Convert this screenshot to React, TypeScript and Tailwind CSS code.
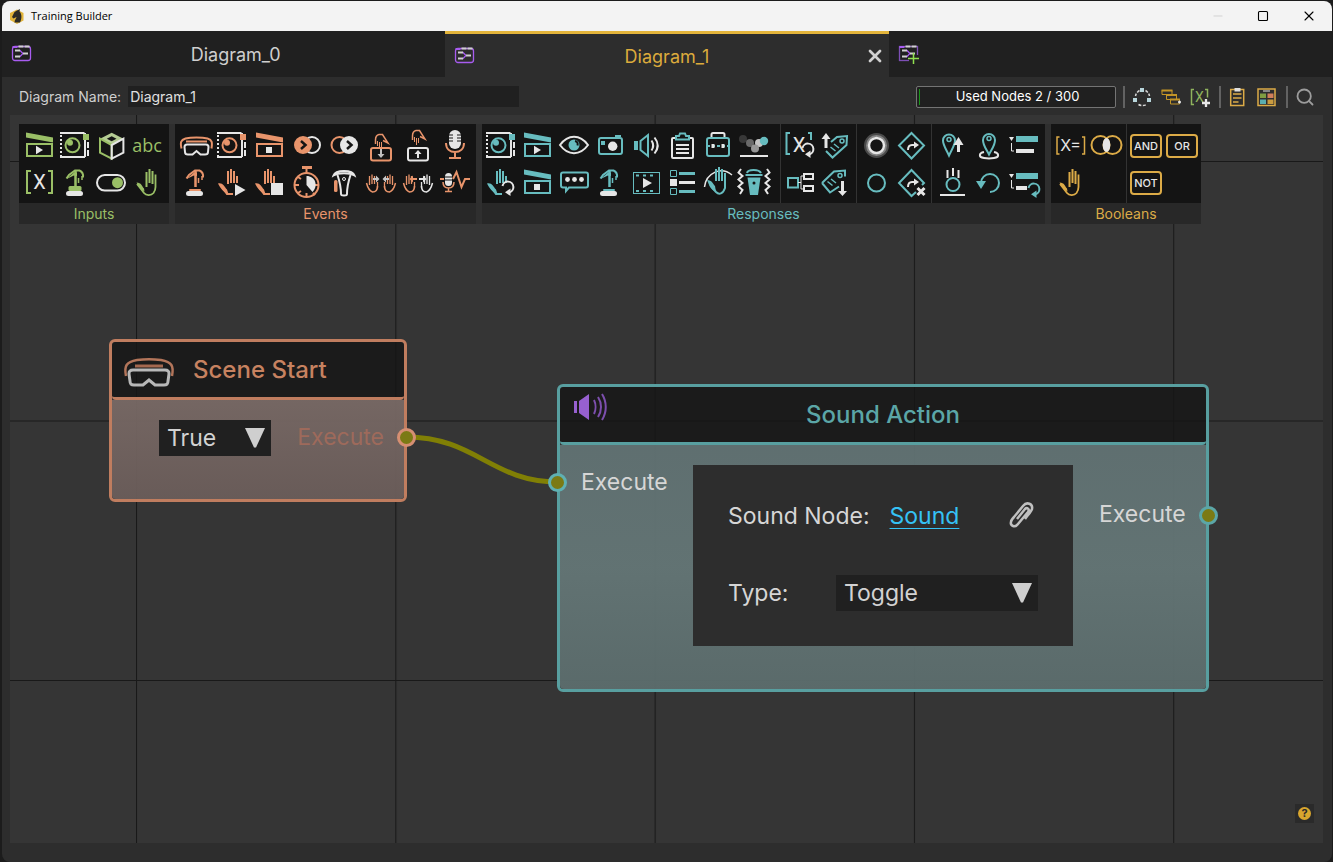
import React from 'react';
import { X, Square, Minus, Search } from 'lucide-react';

const GREEN = '#9abf66';
const ORANGE = '#e8946b';
const TEAL = '#67bcbf';
const YELLOW = '#dcab47';
const WHITE = '#e6e6e6';
const DARK = '#141414';

type Tint = { c: string };

const Icon = ({ children }: { children: React.ReactNode }) => (
  <svg width="36" height="36" viewBox="0 0 36 36" fill="none" strokeWidth="2" aria-hidden="true">
    {children}
  </svg>
);

const Clapper = ({ c, stop }: Tint & { stop?: boolean }) => (
  <Icon>
    <path d="M5 4.500 32 9.500v5L5 9.500z" fill={c} />
    <rect x="6" y="16" width="25" height="12" stroke={c} />
    {stop ? <rect x="15" y="19" width="6" height="6" fill={WHITE} /> : <path d="M15 17.800 22 22l-7 4.200z" fill={WHITE} />}
  </Icon>
);

const Spec = ({ c }: Tint) => (
  <Icon>
    <path d="M3 5h24.500M28 5v24M3 29h25" stroke={WHITE} />
    <path d="M4 7v22" stroke={WHITE} strokeDasharray="2 2" />
    <path d="M31 14v16" stroke={WHITE} strokeDasharray="6 2" />
    <rect x="26" y="6" width="6" height="6" fill={c} />
    <circle cx="15.500" cy="17.300" r="7" stroke={c} />
    <circle cx="13" cy="14.800" r="3" fill={c} />
  </Icon>
);

const Cube = ({ c }: Tint) => (
  <Icon>
    <path d="M18.700 4.800 30.500 10.700 18.700 17 7 10.700z" fill="#b5cc94" />
    <path d="M18.700 8.200 23.500 10.700l-4.800 2.500-4.900-2.500z" fill={DARK} />
    <path d="M18.700 17 7 10.700v14l11.700 6z" stroke={c} />
    <path d="M18.700 17v13.700l11.700-6v-14z" stroke={WHITE} />
  </Icon>
);

const Abc = ({ c }: Tint) => (
  <Icon>
    <text x="18" y="24" textAnchor="middle" fill={c} fontSize="18" fontFamily="'Open Sans',sans-serif">abc</text>
  </Icon>
);

const VarX = ({ c }: Tint) => (
  <Icon>
    <path d="M10 6H6v22h4M27 6h4v22h-4" stroke={c} />
    <text x="18.500" y="24" textAnchor="middle" fill={WHITE} fontSize="20" fontFamily="Roboto,sans-serif">X</text>
  </Icon>
);

const Press = ({ c, raised }: Tint & { raised?: boolean }) => (
  <Icon>
    <path d="M9.500 13.500 12 10l6-4.500h4.500c2.500 1 4 3 3.500 7" stroke={c} />
    <path d="M9.500 14 17 7.500h3V11l-3-.5z" fill={c} />
    <path d="M18.500 6v16" stroke={c} strokeWidth="2.500" />
    <path d="M21.500 13v5M25 11v4" stroke={c} strokeWidth="1.500" />
    {raised ? <rect x="11.500" y="21" width="13" height="5" rx="1.500" fill={c} /> : <rect x="12" y="24" width="12" height="2" rx="1" fill={c} />}
    <rect x="9" y="26" width="17" height="5" rx="2.500" fill={WHITE} />
  </Icon>
);

const Toggle = ({ c }: Tint) => (
  <Icon>
    <rect x="4" y="10" width="28" height="15.500" rx="7.700" stroke={WHITE} />
    <circle cx="24.500" cy="17.700" r="5.500" fill={c} />
  </Icon>
);

const Hand = ({ c }: Tint) => (
  <Icon>
    <path d="M8 19l7 9c2 2.500 7 3 9.500 0 1.500-2 2-4 2-6V9.500" stroke={c} strokeWidth="1.800" />
    <path d="M7.500 17.500c5 0 5.500 4 7.500 6l.5 3c-4-2-6-5-8-9z" fill={c} />
    <path d="M17.500 7v15M20.500 4v14M23.500 6v13" stroke={c} />
  </Icon>
);

// open hand shared by the grab icons, with room for a badge at the lower right
const PalmShape = ({ c }: Tint) => (
  <>
    <path d="M14 6v13M17 4v14M20 6v12M23 11v7" stroke={c} />
    <path d="M8 22l5 7h6" stroke={c} />
    <path d="M4 18.500c5-1 6 3 9 6l1.500 4.500c-5-1.500-8-5.500-10.500-10.500z" fill={c} />
  </>
);

const HandPlay = ({ c }: Tint) => (
  <Icon>
    <PalmShape c={c} />
    <path d="M21 19l10.500 6L21 31z" fill={WHITE} />
  </Icon>
);

const HandStop = ({ c }: Tint) => (
  <Icon>
    <PalmShape c={c} />
    <rect x="20" y="18" width="12" height="12" fill={WHITE} />
  </Icon>
);

const Turn = ({ x, y, c = WHITE }: { x: number; y: number; c?: string }) => (
  <g transform={`translate(${x} ${y})`}>
    <path d="M-5.500-1A5.500 5.500 0 1 1 1 5.500" stroke={c} />
    <path d="M2.500 1.500v7.500L-3 5.300z" fill={c} />
  </g>
);

const HandTurn = ({ c }: Tint) => (
  <Icon>
    <PalmShape c={c} />
    <Turn x={25} y={22} />
  </Icon>
);

const Goggles = ({ c }: Tint) => (
  <Icon>
    <path d="M4.500 20.500C3 14 4 12 8.500 10.500 14 9 25 9 30.500 10.500 35 12 35.500 14 34.500 20.500" stroke={c} />
    <path d="M9 13.500h21" stroke={c} />
    <path d="M10 16.500h19c2 0 2.500 1 2.500 2.500l-.5 5c0 2-1 2.500-3 2.500h-4.500L19.500 23l-4 3.500H11c-2 0-3-.5-3-2.500l-.5-5c0-1.500.5-2.500 2.500-2.500z" stroke={WHITE} />
  </Icon>
);

const Enter = ({ c, leave }: Tint & { leave?: boolean }) => (
  <Icon>
    {leave ? (
      <>
        <circle cx="14.500" cy="17" r="8" stroke={c} />
        <circle cx="24" cy="17" r="9" fill={WHITE} />
        <path d="m22 13 4.500 4-4.500 4" stroke={DARK} strokeWidth="2.500" />
      </>
    ) : (
      <>
        <circle cx="24" cy="17" r="8" stroke={WHITE} />
        <circle cx="15" cy="17" r="9" fill={c} />
        <path d="m13 13 4.500 4-4.500 4" stroke={DARK} strokeWidth="2.500" />
      </>
    )}
  </Icon>
);

const Grab = ({ c, up }: Tint & { up?: boolean }) => (
  <Icon>
    <g transform={up ? 'translate(0 -4)' : undefined}>
      <path d="M13.500 16v-4c0-3 1-5 3.500-5.500h3.500l5.500 8.500-5-2.500" stroke={c} strokeWidth="1.500" />
      <path d="M15.500 13v5M17.500 14v7M19.500 14v5" stroke={c} strokeWidth="1" />
    </g>
    <rect x="9" y="20" width="20" height="12.500" rx="2" stroke={up ? WHITE : c} />
    {up ? <path d="M18 30v-4h-2.500l3.500-4 3.500 4H20v4z" fill={WHITE} /> : <path d="M18 21v5h-2.500l3.500 4 3.500-4H20v-5z" fill="#c0c0c0" />}
  </Icon>
);

const Mic = ({ c }: Tint) => (
  <Icon>
    <rect x="13" y="2" width="12" height="19" rx="6" fill={WHITE} />
    <path d="M13 7h4M13 10h4M13 13h4M21 7h4M21 10h4M21 13h4" stroke={DARK} strokeWidth="1" />
    <path d="M10 15c0 6 4 9 9 9s9-3 9-9M19 24v5M13 30h12" stroke={c} />
  </Icon>
);

const MicWave = ({ c }: Tint) => (
  <Icon>
    <rect x="9" y="8" width="7" height="13" rx="3.500" fill={WHITE} />
    <path d="M9 12h7M9 15h7" stroke={DARK} strokeWidth="1" />
    <path d="M7 17c0 4 2 6 5.500 6s5.500-2 5.500-6M12.500 23v3M9 26.500h7" stroke={c} strokeWidth="1.500" />
    <path d="M4 14h4M17 14l3.500-7 5 15 3.500-8h5" stroke={c} />
  </Icon>
);

const Stopwatch = ({ c }: Tint) => (
  <Icon>
    <circle cx="18.500" cy="20" r="12" stroke={c} />
    <path d="M18.500 4v4M18.500 28v3M7 20h4M27 20h3M10 12l3 2M10 28l3-2M25 28l2 2" stroke={c} />
    <rect x="14" y="1" width="10" height="3" fill={c} />
    <path d="M18.500 11v9l6 7c6-6 3-16-6-16z" fill={WHITE} />
  </Icon>
);

const Torch = ({ c }: Tint) => (
  <Icon>
    <path d="M8.500 10.500c2-6 19-6 21 0-5-3-16-3-21 0z" stroke={WHITE} />
    <path d="M12.500 10c2 6 3.500 12 3.500 19 0 2 6 2 6 0 0-7 1.500-13 3.500-19" stroke={WHITE} />
    <circle cx="19" cy="14" r="1.500" stroke={WHITE} strokeWidth="1" />
    <rect x="9" y="15" width="3.500" height="12" rx="1.500" fill={c} />
  </Icon>
);

const MiniHand = ({ c }: Tint) => (
  <>
    <path d="M4.500 18c1 4 3 8 6 9 3 0 5-2 5-6" stroke={c} strokeWidth="1.500" />
    <path d="M7.500 11v9M10 9.500V19M12.500 11v8M15.500 17v6" stroke={c} strokeWidth="1.300" />
  </>
);

const TwoHands = ({ c, apart }: Tint & { apart?: boolean }) => (
  <Icon>
    <MiniHand c={c} />
    <g transform="translate(38 0) scale(-1 1)">
      <MiniHand c={apart ? WHITE : c} />
    </g>
    {apart ? (
      <path d="M18 13h-4v-2.500L10.500 14l3.500 3.500V15h4z" fill={c} />
    ) : (
      <path d="M11 13h3v-2.500l3.500 3.500-3.500 3.500V15h-3z" fill="#c8c8c8" />
    )}
    {apart ? (
      <path d="M20 13h4v-2.500l3.500 3.500-3.500 3.500V15h-4z" fill={WHITE} />
    ) : (
      <path d="M27 13h-3v-2.500L20.500 14l3.500 3.500V15h3z" fill="#c8c8c8" />
    )}
  </Icon>
);

const Eye = ({ c }: Tint) => (
  <Icon>
    <path d="M5 17c8-11 20-11 28 0-8 11-20 11-28 0z" stroke={WHITE} />
    <circle cx="19" cy="17" r="5.500" fill={c} />
    <path d="M20 13c2.500.5 3 2.500 2.500 4.500" stroke={DARK} />
  </Icon>
);

const Camera = ({ c }: Tint) => (
  <Icon>
    <rect x="8" y="10" width="23" height="16" rx="2" stroke={c} />
    <rect x="10" y="13" width="4" height="4" fill={c} />
    <rect x="24" y="7" width="6" height="2" fill={c} />
    <circle cx="21.700" cy="18.300" r="4.700" fill={WHITE} />
  </Icon>
);

const Speaker = ({ c }: Tint) => (
  <Icon>
    <rect x="7" y="13" width="4" height="9" fill={c} />
    <path d="M13.500 13 21 7v21l-7.500-6z" stroke={c} />
    <path d="M24.500 12.500c2 3 2 7 0 10M27.500 9.500c4 5 4 11 0 16" stroke={WHITE} />
  </Icon>
);

const Clipboard = ({ c }: Tint) => (
  <Icon>
    <rect x="9" y="10" width="21" height="20" rx="1" stroke={WHITE} />
    <path d="M13 11.500V8h3l1-2.500h5L23 8h3v3.500z" stroke={c} fill={DARK} />
    <path d="M13 17h13M13 21h13M13 25h13" stroke={WHITE} />
  </Icon>
);

const Toolbox = ({ c }: Tint) => (
  <Icon>
    <path d="M12.500 9V6.500c0-1 .5-1.500 1.500-1.500h10c1 0 1.500.5 1.500 1.500V9" stroke={WHITE} />
    <rect x="8" y="10" width="22" height="18" rx="2" stroke={c} />
    <path d="M8 18h22" stroke={c} strokeDasharray="3 2" />
    <path d="M12.500 16h3v4h-3zM22.500 16h3v4h-3z" fill={WHITE} />
  </Icon>
);

const Physics = ({ c }: Tint) => (
  <Icon>
    <circle cx="8" cy="11" r="4" fill="#383838" />
    <circle cx="15" cy="15" r="4" fill="#6a6a6a" />
    <circle cx="24" cy="15" r="4" fill="#c4c4c4" />
    <circle cx="20" cy="20.500" r="4" fill="#979797" />
    <circle cx="29" cy="13" r="4.200" fill={c} />
    <path d="M5 28h28" stroke={WHITE} />
  </Icon>
);

const Chat = ({ c }: Tint) => (
  <Icon>
    <path d="M8 7.500h23a2 2 0 0 1 2 2v11a2 2 0 0 1-2 2H14L11 26v-3.500H8a2 2 0 0 1-2-2v-11a2 2 0 0 1 2-2z" stroke={c} />
    <circle cx="12.500" cy="14.500" r="2.400" fill={WHITE} />
    <circle cx="19.500" cy="14.500" r="2.400" fill={WHITE} />
    <circle cx="26.500" cy="14.500" r="2.400" fill={WHITE} />
  </Icon>
);

const Film = ({ c }: Tint) => (
  <Icon>
    <rect x="6.500" y="7.500" width="26" height="21" stroke={c} strokeWidth="1" />
    <path d="M9 10.500h21M9 26h21" stroke={c} strokeDasharray="3 4" />
    <path d="M16 13 25 18l-9 5z" fill={WHITE} />
  </Icon>
);

const ListIcon = ({ c }: Tint) => (
  <Icon>
    <path d="M7.500 5.500h6v6h-6zM7.500 23.500h6v6h-6z" stroke={c} strokeWidth="1" />
    <path d="M7 14h7v7H7z" fill={WHITE} />
    <path d="M16 8.500h16M16 26.500h16" stroke={c} strokeWidth="3" />
    <path d="M16 17.500h16" stroke={WHITE} strokeWidth="3" />
  </Icon>
);

const HandWave = ({ c }: Tint) => (
  <Icon>
    <path d="M5.500 22C7 8 22 1 33 10" stroke={WHITE} strokeWidth="1.500" />
    <path d="M17 4v12M20 2v14M23 4v12M11 20l6 7c3 3 7 2 9-4V8" stroke={c} />
    <path d="M8 15c5 0 6 4 8 6l1 6c-5-2-7-7-9-12z" fill={c} />
  </Icon>
);

const Vibrate = ({ c }: Tint) => (
  <Icon>
    <path d="M6 4 3.500 7.500l4 3.500-4 3.500 4 3.500-4 3.500 4 3.500L5 29M32 4l2.500 3.500-4 3.500 4 3.500-4 3.500 4 3.500-4 3.500L33 29" stroke={WHITE} />
    <path d="M12 8c1-4 12-4 14 0M10.500 10h17" stroke={c} />
    <path d="M12.500 12.500h13L23 30h-8z" fill={c} />
    <circle cx="19" cy="18" r="1.500" fill={DARK} />
  </Icon>
);

const VarTurn = ({ c }: Tint) => (
  <Icon>
    <path d="M8 5H4.500v21H8M26 5h3v7" stroke={c} />
    <text x="17" y="24" textAnchor="middle" fill={WHITE} fontSize="20" fontFamily="Roboto,sans-serif">X</text>
    <Turn x={26} y={21} />
  </Icon>
);

const Tag = ({ c, down }: Tint & { down?: boolean }) => (
  <Icon>
    <path d={down ? 'M4 18 16 6.500l11-1v6M4 18l8 9.500 9-6' : 'M8 23l6.500 6.500L28.500 17l.5-9-10 1-6 5'} stroke={c} />
    <circle cx={down ? 22 : 24} cy={down ? 10.500 : 13} r="2" stroke={c} strokeWidth="1.500" />
    <path d={down ? 'm9.500 16.500 5 4M13 14l5 4' : 'm12.500 19 5 4M16 16l5 4'} stroke={c} strokeWidth="1.500" />
    {down ? <path d="M23 16h3v10h3l-4.500 5-4.500-5h3z" fill={WHITE} /> : <path d="M6.500 20V11H3.500L8 5l4.500 6h-3v9z" fill={WHITE} />}
  </Icon>
);

const Branch = ({ c }: Tint) => (
  <Icon>
    <rect x="6" y="13" width="10" height="9.500" stroke={c} />
    <path d="M16 17.500h3M21 11h-2v13h2" stroke={WHITE} strokeWidth="1" />
    <path d="M22 9h9v5h-9zM22 21h9v5h-9z" stroke={WHITE} />
  </Icon>
);

const Glow = () => (
  <Icon>
    <circle cx="18.500" cy="17.500" r="10.500" stroke="#4a4a4a" strokeWidth="4" />
    <circle cx="18.500" cy="17.500" r="9.500" stroke="#858585" />
    <circle cx="18.500" cy="17.500" r="7.500" stroke={WHITE} strokeWidth="2.500" />
  </Icon>
);

const Ring = ({ c }: Tint) => (
  <Icon>
    <circle cx="18.500" cy="18" r="8.500" stroke={c} />
  </Icon>
);

const Route = ({ c, cancel }: Tint & { cancel?: boolean }) => (
  <Icon>
    <path d={cancel ? 'M22 27l-4.500 4L5 18 17.500 5 30 18l-2 2' : 'M17.500 5 30 17.500 17.500 30.500 5 17.500z'} stroke={c} />
    <path d="M14 22c0-3 1-5 4-5h3" stroke={WHITE} />
    <path d="m20 13.500 5 3.500-5 3.500z" fill={WHITE} />
    {cancel && <path d="m23.500 23 7 7M30.500 23l-7 7" stroke={WHITE} strokeWidth="3" />}
  </Icon>
);

const PinUp = ({ c }: Tint) => (
  <Icon>
    <path d="M15 27.500C12 21 9 17 9 12.500a6 6 0 0 1 12 0c0 4.500-3 8.500-6 15z" stroke={c} />
    <circle cx="15" cy="11.500" r="2" stroke={c} strokeWidth="1.500" />
    <path d="M23 24v-7h-3.500l5-8 5 8H26v7z" fill={WHITE} />
  </Icon>
);

const Pin = ({ c }: Tint) => (
  <Icon>
    <path d="M14 24c-5 1-6 5 0 6 3 .5 7 .5 10 0 6-1 5-5 0-6" stroke={WHITE} />
    <path d="M19 26.500c-3-6-6-9-6-14.500a6 6 0 0 1 12 0c0 5.500-3 8.500-6 14.500z" stroke={c} />
    <circle cx="19" cy="10.500" r="2" stroke={c} strokeWidth="1.500" />
  </Icon>
);

const Tree = ({ c, turn }: Tint & { turn?: boolean }) => (
  <Icon>
    <path d="M3 9h5l-2.500 4z" fill={WHITE} />
    <path d="M5.500 15v8H8" stroke={WHITE} strokeWidth="1" />
    <rect x="10" y="8" width="22" height="6" fill={c} />
    <rect x="10" y="21" width={turn ? 11 : 18} height="4" fill={WHITE} />
    {turn && <Turn x={28} y={24} c={c} />}
  </Icon>
);

const Drop = ({ c }: Tint) => (
  <Icon>
    <path d="M13.500 5v8M19 3v8M24.500 5v8M6 30h25" stroke={WHITE} />
    <circle cx="19" cy="19.500" r="6.500" stroke={c} />
  </Icon>
);

const Undo = ({ c }: Tint) => (
  <Icon>
    <path d="M11 18a9 9 0 1 1 9 9" stroke={c} />
    <path d="M6 16h10l-5 8z" fill={c} />
  </Icon>
);

const VarEquals = ({ c }: Tint) => (
  <Icon>
    <path d="M7.500 9H5v17h2.500M30 9h2.500v17H30" stroke={c} strokeWidth="1.500" />
    <text x="18.500" y="23" textAnchor="middle" fill={WHITE} fontSize="16" fontFamily="Inter,sans-serif">X=</text>
  </Icon>
);

const Venn = ({ c }: Tint) => (
  <Icon>
    <circle cx="12.500" cy="17" r="9" stroke={c} />
    <circle cx="24.500" cy="17" r="9" stroke={c} />
    <ellipse cx="18.500" cy="17" rx="3.800" ry="7" fill={WHITE} />
  </Icon>
);

const Gate = ({ c, label }: Tint & { label: string }) => (
  <Icon>
    <rect x="3" y="7" width="30" height="22" rx="3" stroke={c} />
    <text x="18" y="22" textAnchor="middle" fill={WHITE} fontSize="11" fontWeight="500" fontFamily="Inter,sans-serif">{label}</text>
  </Icon>
);

type Tool = [string, React.ReactNode];

const groups: { title: string; color: string; sections: { grid: string; tools: Tool[] }[] }[] = [
  {
    title: 'Inputs',
    color: 'text-[#9abf66]',
    sections: [
      {
        grid: 'grid-cols-[repeat(4,36px)] pl-0.5 pr-1',
        tools: [
          ['Video', <Clapper c={GREEN} />], ['Object', <Spec c={GREEN} />], ['Model', <Cube c={GREEN} />], ['Text', <Abc c={GREEN} />],
          ['Variable', <VarX c={GREEN} />], ['Button', <Press c={GREEN} raised />], ['Switch', <Toggle c={GREEN} />], ['Hand', <Hand c={GREEN} />]
        ]
      }
    ]
  },
  {
    title: 'Events',
    color: 'text-[#e8946b]',
    sections: [
      {
        grid: 'grid-cols-[repeat(8,37px)] pl-px pr-1',
        tools: [
          ['Scene start', <Goggles c={ORANGE} />], ['Object event', <Spec c={ORANGE} />], ['Video stopped', <Clapper c={ORANGE} stop />], ['Enter', <Enter c={ORANGE} />],
          ['Leave', <Enter c={ORANGE} leave />], ['Put down', <Grab c={ORANGE} />], ['Pick up', <Grab c={ORANGE} up />], ['Voice', <Mic c={ORANGE} />],
          ['Pressed', <Press c={ORANGE} />], ['Hand start', <HandPlay c={ORANGE} />], ['Hand stop', <HandStop c={ORANGE} />], ['Timer', <Stopwatch c={ORANGE} />],
          ['Torch', <Torch c={ORANGE} />], ['Hands together', <TwoHands c={ORANGE} />], ['Hands apart', <TwoHands c={ORANGE} apart />], ['Voice level', <MicWave c={ORANGE} />]
        ]
      }
    ]
  },
  {
    title: 'Responses',
    color: 'text-[#67bcbf]',
    sections: [
      {
        grid: 'grid-cols-[repeat(8,36px)] pl-px pr-[9px]',
        tools: [
          ['Object action', <Spec c={TEAL} />], ['Play video', <Clapper c={TEAL} />], ['Visibility', <Eye c={TEAL} />], ['Camera', <Camera c={TEAL} />],
          ['Sound action', <Speaker c={TEAL} />], ['Checklist', <Clipboard c={TEAL} />], ['Toolbox', <Toolbox c={TEAL} />], ['Physics', <Physics c={TEAL} />],
          ['Hand reset', <HandTurn c={TEAL} />], ['Stop video', <Clapper c={TEAL} stop />], ['Message', <Chat c={TEAL} />], ['Press button', <Press c={TEAL} />],
          ['Animation', <Film c={TEAL} />], ['List', <ListIcon c={TEAL} />], ['Wave', <HandWave c={TEAL} />], ['Vibrate', <Vibrate c={TEAL} />]
        ]
      },
      {
        grid: 'grid-cols-[repeat(2,36px)] pl-px pr-0.5',
        tools: [['Set variable', <VarTurn c={TEAL} />], ['Add tag', <Tag c={TEAL} />], ['Branch', <Branch c={TEAL} />], ['Remove tag', <Tag c={TEAL} down />]]
      },
      {
        grid: 'grid-cols-[repeat(2,36px)] px-px',
        tools: [['Highlight', <Glow />], ['Route', <Route c={TEAL} />], ['Ring', <Ring c={TEAL} />], ['Cancel route', <Route c={TEAL} cancel />]]
      },
      {
        grid: 'grid-cols-[repeat(3,36px)] pl-0.5 pr-[3px]',
        tools: [
          ['Move pin', <PinUp c={TEAL} />], ['Pin', <Pin c={TEAL} />], ['Hierarchy', <Tree c={TEAL} />],
          ['Drop', <Drop c={TEAL} />], ['Undo', <Undo c={TEAL} />], ['Reset hierarchy', <Tree c={TEAL} turn />]
        ]
      }
    ]
  },
  {
    title: 'Booleans',
    color: 'text-[#dcab47]',
    sections: [
      {
        grid: 'grid-cols-[repeat(2,36px)] pl-px pr-0.5',
        tools: [['Compare', <VarEquals c={YELLOW} />], ['Overlap', <Venn c={YELLOW} />], ['Hand check', <Hand c={YELLOW} />]]
      },
      {
        grid: 'grid-cols-[repeat(2,36px)] px-px',
        tools: [['And', <Gate c={YELLOW} label="AND" />], ['Or', <Gate c={YELLOW} label="OR" />], ['Not', <Gate c={YELLOW} label="NOT" />]]
      }
    ]
  }
];

const DiagramIcon = ({ add }: { add?: boolean }) => (
  <svg width="22" height="20" viewBox="0 0 22 20" fill="none" aria-hidden="true">
    <rect x="1.500" y="2.500" width="18" height="14" rx={add ? 0 : 2.500} stroke={add ? '#7d4fb5' : '#a85cf0'} strokeWidth="1.300" />
    <path d="M1.500 3h5" stroke="#a85cf0" strokeWidth="2" />
    <path d="M7.500 2.500h11" stroke="#d0d0d0" strokeWidth="2" strokeDasharray="5 1" />
    <path d="M8.500 6 12 9.500 8.500 13" stroke="#a85cf0" strokeWidth="1.300" />
    <path d="M4 6.500h5M4 12.500h5M12 9.500h5" stroke="#d0d0d0" strokeWidth="2" />
    {add && (
      <>
        <path d="M11 11h11v9H11z" fill="#202020" />
        <path d="M15.500 9v11M10 14.500h11" stroke="#8fe04f" strokeWidth="1.500" />
      </>
    )}
  </svg>
);

const Logo = () => (
  <svg width="16" height="17" viewBox="0 0 16 17" aria-hidden="true">
    <path d="M8 1.500 14.500 5v7.500L8 16 1 12V5z" fill="#e2b43a" />
    <path d="M5.500 14.500c0-3 2-4 2-5.500L4.500 10.500 3 9l2.500-5L8 2.500 11 1l-.5 2.500c2.500 2.500 2.500 7 .5 11z" fill="#2c2b26" />
  </svg>
);

const TitleBar = () => (
  <header className="flex h-[30px] shrink-0 items-center rounded-t-lg bg-[#f3f3f3] pl-[7px] text-black">
    <Logo />
    <h1 className="ml-1.5 flex-1 font-['Open_Sans',sans-serif] text-[11px]">Training Builder</h1>
    <button aria-label="Minimize" className="flex h-full w-[45px] items-center justify-center text-[#c4c4c4]">
      <Minus size={14} strokeWidth={1.2} />
    </button>
    <button aria-label="Maximize" className="flex h-full w-[45px] items-center justify-center">
      <Square size={12} strokeWidth={2.2} />
    </button>
    <button aria-label="Close window" className="flex h-full w-[47px] items-center justify-center">
      <X size={16} strokeWidth={1.6} />
    </button>
  </header>
);

const Tabs = () => (
  <nav className="grid h-[46px] shrink-0 grid-cols-3 bg-[#202020] text-lg">
    <button className="relative flex items-center justify-center">
      <span className="absolute left-[9px]"><DiagramIcon /></span>
      <span className="pt-0.5 pl-6">Diagram_0</span>
    </button>
    <div className="relative flex items-center border-t-3 border-[#e3b43b] bg-[#2d2d2d] text-[#dcab3c]">
      <span className="absolute left-[9px]"><DiagramIcon /></span>
      <button className="flex-1 pt-0.5">Diagram_1</button>
      <button aria-label="Close Diagram_1" className="absolute right-1 text-[#d0d0d0]">
        <X size={20} strokeWidth={3.2} />
      </button>
    </div>
    <button aria-label="New diagram" className="flex items-center pl-[9px]">
      <DiagramIcon add />
    </button>
  </nav>
);

const Separator = () => <span className="h-[22px] w-0.5 bg-[#626262]" />;

const NameBar = () => (
  <div className="flex h-[38px] shrink-0 items-center px-[17px] pt-px text-[13px]">
    <label htmlFor="diagram-name" className="text-sm text-[#cfcfcf]">Diagram Name:</label>
    <input id="diagram-name" defaultValue="Diagram_1" className="ml-[7px] h-[21px] w-[391px] bg-[#202020] px-0.5 text-sm text-[#e0e0e0] outline-none" />
    <div className="ml-auto flex items-center gap-[7px]">
      <div className="flex h-[22px] w-[200px] items-center rounded-xs border border-[#747474] bg-[#202020] pl-0.5 text-white">
        <span className="h-4 w-px bg-[#199619]" />
        <span className="flex-1 text-center">Used Nodes 2 / 300</span>
      </div>
      <Separator />
      <button aria-label="Arrange nodes">
        <svg width="22" height="22" viewBox="0 0 22 22" fill="none">
          <path d="M7.500 4.500A8 8 0 0 0 3.500 10M13.500 4.500A8 8 0 0 1 17.500 10M6.500 18.500c2.500 1.500 5.500 1.500 8 0" stroke="#d8d8d8" strokeWidth="1.500" strokeDasharray="3 1.500" />
          <path d="M8 2h4v4H8zM1 12h4v4H1zM15 12h4v4h-4z" fill="#b9d6dc" />
        </svg>
      </button>
      <button aria-label="Node stack">
        <svg width="22" height="22" viewBox="0 0 22 22" fill="none">
          <path d="M1 4.500h10v4H1zM5.500 9h10v4.500h-10zM9.500 13.500h9V18h-9z" fill="#2d2d2d" stroke="#c29427" />
          <path d="M.5 4.500h11M5 9h11M9 13.500h10" stroke="#c29427" strokeWidth="2" />
          <circle cx="18.500" cy="16" r="1.500" fill="#e6e6e6" />
        </svg>
      </button>
      <button aria-label="Add variable">
        <svg width="22" height="22" viewBox="0 0 22 22" fill="none">
          <path d="M4 3.500H1.500v15H4M15 3.500h2.500v8" stroke="#8fb35d" strokeWidth="1.500" />
          <text x="9.500" y="16" textAnchor="middle" fontSize="14" fontFamily="Roboto,sans-serif" fill="#8fb35d">X</text>
          <path d="M16 13v8M12 17h8" stroke="#e8e8e8" strokeWidth="2.300" />
        </svg>
      </button>
      <Separator />
      <button aria-label="Notes">
        <svg width="22" height="22" viewBox="0 0 22 22" fill="none">
          <rect x="2.700" y="3.500" width="13" height="16" stroke="#dcab47" strokeWidth="1.500" />
          <path d="M5 8h8.500M5 12h8.500M5 16h5.500" stroke="#dcab47" strokeWidth="1.500" />
          <rect x="6.500" y="2" width="6" height="3.500" fill="#e0e0e0" />
        </svg>
      </button>
      <button aria-label="Palette">
        <svg width="22" height="22" viewBox="0 0 22 22" fill="none">
          <rect x="1" y="3" width="17" height="16.500" stroke="#dcab47" strokeWidth="1.500" />
          <path d="M6 5h7" stroke="#e0e0e0" />
          <path d="M3 7.500h6v4.500H3z" fill="#7f9c42" />
          <path d="M10.500 7.500h6v4.500h-6z" fill="#d07f5a" />
          <path d="M3 13.500h6V18H3z" fill="#5aaeb0" />
          <path d="M10.500 13.500h6V18h-6z" fill="#c99b40" />
        </svg>
      </button>
      <Separator />
      <button aria-label="Search" className="flex w-5 text-[#9c9c9c]">
        <Search size={20} strokeWidth={2.2} />
      </button>
    </div>
  </div>
);

const Palette = () => (
  <div className="flex w-fit gap-1.5 bg-[#2f2f2f]">
    {groups.map(group => (
      <section key={group.title} className="bg-[#282828]">
        <div className="flex divide-x divide-[#333] bg-[#141414]">
          {group.sections.map((section, i) => (
            <div key={i} className={`grid auto-rows-[36px] justify-items-center gap-y-px pt-1 pb-0.5 ${section.grid}`}>
              {section.tools.map(([name, icon]) => (
                <button key={name} aria-label={name} title={name}>{icon}</button>
              ))}
            </div>
          ))}
        </div>
        <h2 className={`text-center text-sm leading-[21px] ${group.color}`}>{group.title}</h2>
      </section>
    ))}
  </div>
);

const Dropdown = ({ id, options, className }: { id: string; options: string[]; className: string }) => (
  <div className={`relative h-9 ${className}`}>
    <select id={id} aria-label={id} className="h-full w-full appearance-none bg-[#202020] pl-2 text-[23px] text-[#d2d2d2] outline-none">
      {options.map(option => <option key={option}>{option}</option>)}
    </select>
    <svg width="20" height="20" viewBox="0 0 20 20" className="pointer-events-none absolute top-2 right-1.5" aria-hidden="true">
      <path d="M0 0h20l-9 19.500H9z" fill="#cfcfcf" />
    </svg>
  </div>
);

const Port = ({ className }: { className: string }) => (
  <span className={`absolute size-[19px] rounded-full border-3 bg-[#7b7a14] ${className}`} />
);

const SceneStartNode = () => (
  <article className="absolute top-[224px] left-[99px] h-[163px] w-[298px] rounded-md border-3 border-[#c07d5f]">
    <div className="flex h-[58px] items-center rounded-sm border-b-3 border-[#c07d5f] bg-[#151515]/80 pl-[11px]">
      <svg width="52" height="36" viewBox="0 0 52 36" fill="none" aria-hidden="true">
        <path d="M3 24c-2-10 0-14 11-16 8-1 16-1 24 0 11 2 13 6 11 16" stroke="#b3755a" strokeWidth="2.500" />
        <path d="M12 14h28" stroke="#a4684f" strokeWidth="3" />
        <path d="M10 18h32c3 0 4 1 4 4l-1 7c0 3-1 4-4 4h-9l-6-5-6 5h-9c-3 0-4-1-4-4l-1-7c0-3 1-4 4-4z" stroke="#b8b8b8" strokeWidth="3" />
      </svg>
      <h3 className="pl-[18px] text-2xl font-medium text-[#c78260]">Scene Start</h3>
    </div>
    <div className="flex h-[99px] items-start justify-between rounded-b-sm bg-gradient-to-b from-[#786965]/95 to-[#6b5d5a]/95 pt-5 pr-5 pl-[47px]">
      <Dropdown id="scene-start" options={['True', 'False']} className="w-28" />
      <span className="text-[23px] leading-[34px] text-[#9e6a5b]">Execute</span>
    </div>
    <Port className="top-[86px] -right-3 border-[#d68f72]" />
  </article>
);

const SoundActionNode = () => (
  <article className="absolute top-[269px] left-[547px] h-[308px] w-[652px] rounded-md border-3 border-[#589fa0]">
    <div className="relative flex h-[58px] items-center justify-center rounded-sm border-b-3 border-[#589fa0] bg-[#151515]/80">
      <svg width="34" height="28" viewBox="0 0 34 28" fill="none" className="absolute top-1.5 left-3.5" aria-hidden="true">
        <path d="M0 8h3v12H0zM5 8 15 1v26L5 20z" fill="#9760d0" />
        <path d="M20 7c2 4 2 10 0 14M24 4c4 6 4 14 0 20M28 1c5 8 5 18 0 26" stroke="#7d4fae" strokeWidth="2" />
      </svg>
      <h3 className="text-2xl font-medium text-[#5ba6a7]">Sound Action</h3>
    </div>
    <div className="flex h-[244px] items-start rounded-b-sm bg-gradient-to-b from-[#617273]/95 via-[#647676]/95 to-[#5c6d6d]/95 pt-5 pl-[21px] text-[23px] text-[#d6d6d6]">
      <span className="w-28 leading-[34px]">Execute</span>
      <div className="h-[181px] w-[380px] bg-[#2d2d2d] px-[35px] pt-[33px]">
        <div className="flex h-9 items-center">
          <span>Sound Node:</span>
          <a href="#sound" className="ml-5 text-[#35c2f5] underline decoration-1 underline-offset-4">Sound</a>
          <button aria-label="Attach sound" className="mr-1 ml-auto">
            <svg width="26" height="28" viewBox="0 0 26 28" fill="none">
              <path d="M9 17 17 7c2-2 5 0 3 3L10 22c-3 4-8 2-7-2 0-2 2-4 3-5L15 4c4-5 10-2 9 3-1 3-5 7-7 10" stroke="#c0c0c0" strokeWidth="2.500" />
            </svg>
          </button>
        </div>
        <div className="mt-[41px] flex h-9 items-center justify-between">
          <label htmlFor="type">Type:</label>
          <Dropdown id="type" options={['Toggle', 'Play', 'Stop']} className="w-[202px]" />
        </div>
      </div>
      <span className="ml-[26px] pt-8 leading-[34px]">Execute</span>
    </div>
    <Port className="top-[86px] -left-3 border-[#5fb0b2]" />
    <Port className="top-[119px] -right-3 border-[#5ba6a7]" />
  </article>
);

const Canvas = () => (
  <main className="relative mr-[9px] mb-[19px] ml-2 flex-1 overflow-hidden bg-[#353535] p-[9px]">
    <svg className="absolute inset-0 h-full w-full" aria-hidden="true">
      <defs>
        <pattern id="grid" x="126" y="46" width="259.300" height="259.500" patternUnits="userSpaceOnUse">
          <path d="M.5 0v260M0 .5h260" stroke="#191919" strokeWidth="1.200" />
        </pattern>
      </defs>
      <rect width="100%" height="100%" fill="url(#grid)" />
      <path d="M396 322c70 0 85 45 152 45" fill="none" stroke="#807f05" strokeWidth="5" />
    </svg>
    <div className="relative">
      <Palette />
    </div>
    <SceneStartNode />
    <SoundActionNode />
    <button aria-label="Help" className="absolute right-[9px] bottom-5 flex size-[19px] items-center justify-center bg-[#2a2a2a]">
      <span className="flex size-[13px] items-center justify-center rounded-full bg-[#d9a62e] text-[11px] leading-none font-bold text-[#2a2a2a]">?</span>
    </button>
  </main>
);

const App = () => {
  return (
    <div className="min-h-screen bg-[#1c1c1c] pt-px pr-px pl-0.5 font-[Inter,sans-serif] text-[#cfcfcf]">
      <div className="flex min-h-[calc(100vh-1px)] flex-col rounded-lg bg-[#2d2d2d]">
        <TitleBar />
        <Tabs />
        <NameBar />
        <Canvas />
      </div>
    </div>
  );
};

export default App;
